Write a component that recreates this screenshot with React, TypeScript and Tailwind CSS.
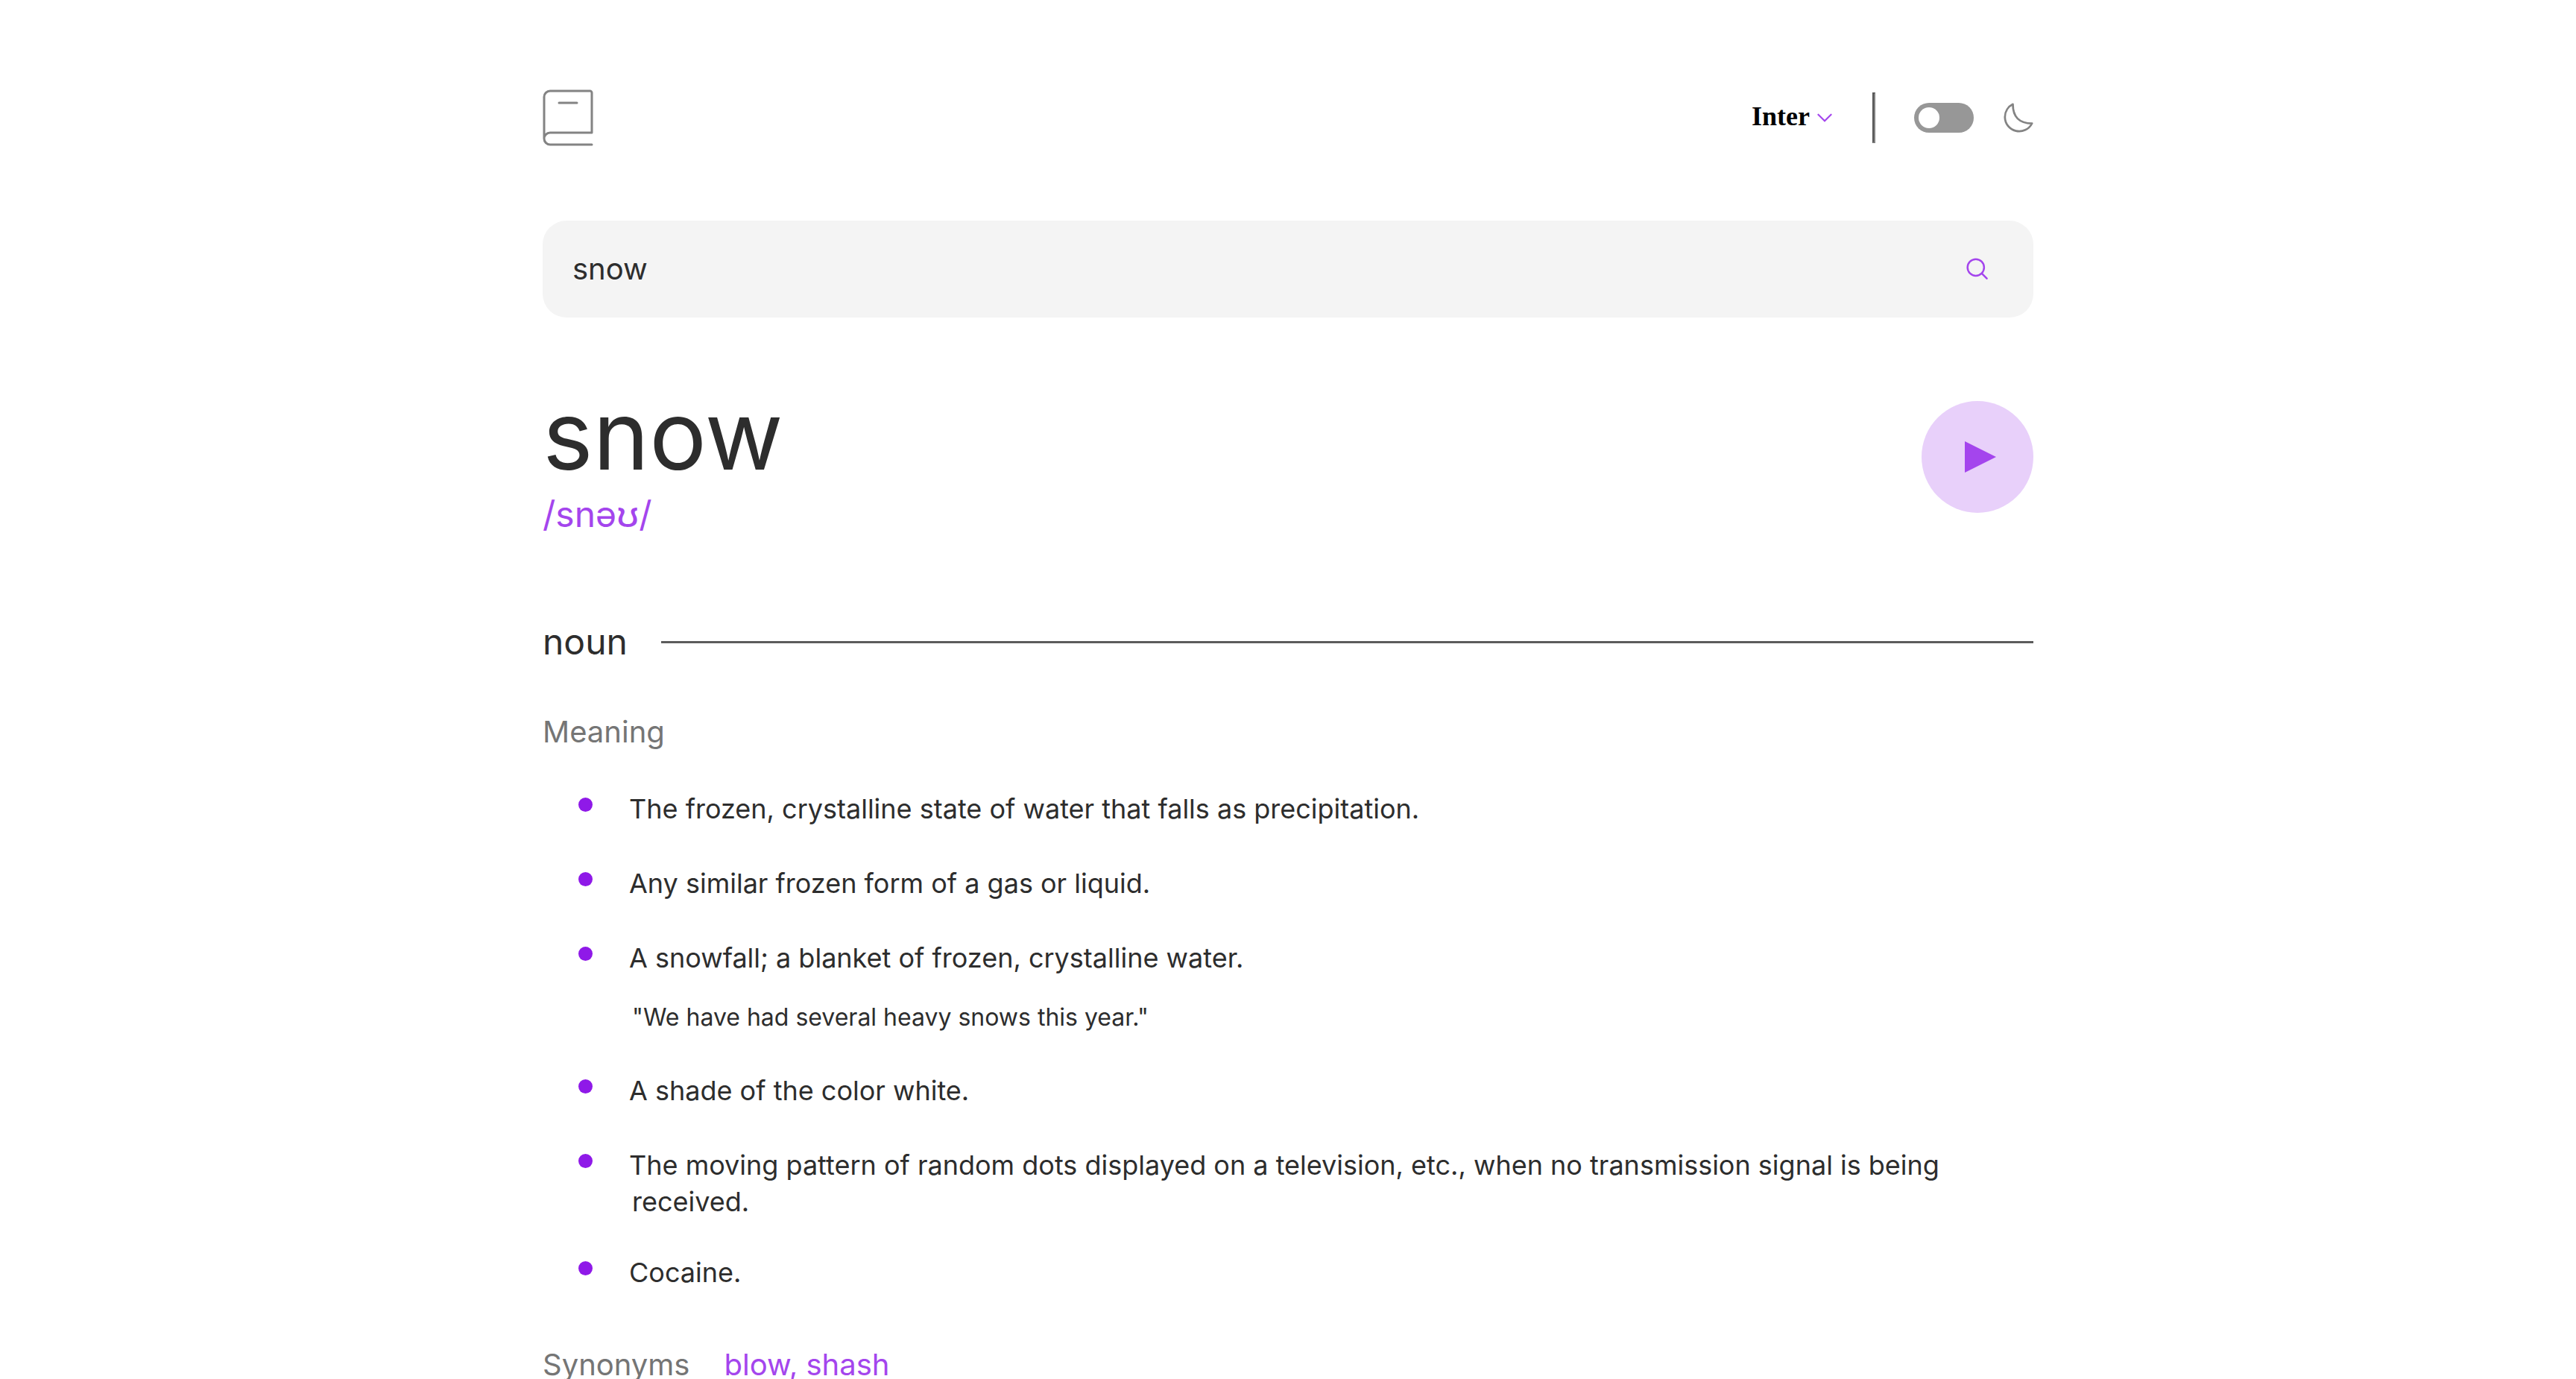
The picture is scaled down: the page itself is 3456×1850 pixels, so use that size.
import { useState } from "react";

type Definition = { text: string; example?: string };

const definitions: Definition[] = [
  { text: "The frozen, crystalline state of water that falls as precipitation." },
  { text: "Any similar frozen form of a gas or liquid." },
  {
    text: "A snowfall; a blanket of frozen, crystalline water.",
    example: '"We have had several heavy snows this year."',
  },
  { text: "A shade of the color white." },
  {
    text: "The moving pattern of random dots displayed on a television, etc., when no transmission signal is being received.",
  },
  { text: "Cocaine." },
];

const synonyms = ["blow", "shash"];

function BookLogo() {
  return (
    <svg className="h-[76px] w-[68px]" viewBox="0 0 34 38" aria-hidden="true">
      <path
        d="M1 33V5a4 4 0 0 1 4-4h26.8A1.2 1.2 0 0 1 33 2.2V29M5 29h28M5 37h28M5 37a4 4 0 1 1 0-8M11 9h12"
        fill="none"
        stroke="#838383"
        strokeLinecap="round"
        strokeWidth="1.5"
      />
    </svg>
  );
}

function FontPicker() {
  return (
    <div className="relative">
      <select
        aria-label="Font"
        defaultValue="Inter"
        className="block appearance-none bg-transparent pr-[30px] pb-1 font-['Liberation_Serif',serif] text-[36px] leading-[44px] font-bold text-black outline-none"
      >
        <option>Inter</option>
      </select>
      <svg
        className="pointer-events-none absolute top-1/2 right-0 h-[12px] w-[20px] -translate-y-1/2"
        viewBox="0 0 14 8"
        aria-hidden="true"
      >
        <path d="m1 1 6 6 6-6" fill="none" stroke="#A445ED" strokeWidth="1.5" strokeLinecap="round" />
      </svg>
    </div>
  );
}

function ThemeSwitch() {
  const [dark, setDark] = useState(false);
  return (
    <label className="flex items-center gap-10">
      <input
        type="checkbox"
        role="switch"
        aria-label="Dark mode"
        checked={dark}
        onChange={(e) => setDark(e.target.checked)}
        className="flex h-10 w-20 appearance-none items-center rounded-full bg-[#979797] px-1.5 before:size-7 before:rounded-full before:bg-white checked:justify-end checked:bg-[#a445ed]"
      />
      <svg className="size-10" viewBox="0 0 22 22" aria-hidden="true">
        <path
          d="M1 10.449a10.544 10.544 0 0 0 19.993 4.686C11.544 15.135 6.858 10.448 6.858 1A10.545 10.545 0 0 0 1 10.449Z"
          fill="none"
          stroke="#838383"
          strokeWidth="1.5"
          strokeLinecap="round"
          strokeLinejoin="round"
        />
      </svg>
    </label>
  );
}

function SearchBar() {
  const [query, setQuery] = useState("snow");
  return (
    <form
      onSubmit={(e) => e.preventDefault()}
      className="mt-[100px] flex h-[130px] items-center rounded-[32px] bg-[#f4f4f4] pr-[60px] pl-10"
    >
      <input
        type="text"
        aria-label="Search for a word"
        value={query}
        onChange={(e) => setQuery(e.target.value)}
        className="min-w-0 flex-1 bg-transparent text-[40px] outline-none"
      />
      <button type="submit" aria-label="Search">
        <svg className="size-[30px]" viewBox="0 0 18 18" aria-hidden="true">
          <path
            d="m12.663 12.663 3.887 3.887M1 7.664a6.665 6.665 0 1 0 13.33 0 6.665 6.665 0 0 0-13.33 0Z"
            fill="none"
            stroke="#A445ED"
            strokeWidth="1.5"
            strokeLinecap="round"
            strokeLinejoin="round"
          />
        </svg>
      </button>
    </form>
  );
}

function WordHeader() {
  return (
    <section className="mt-20 flex items-center justify-between">
      <div>
        <h1 className="text-[128px] leading-[155px]">snow</h1>
        <p className="text-[48px] leading-[58px] text-[#a445ed]">/snəʊ/</p>
      </div>
      <button type="button" aria-label="Play pronunciation" className="size-[150px] rounded-full bg-[#e8d0fa]">
        <svg className="size-full" viewBox="0 0 75 75" aria-hidden="true">
          <path d="M29 27v21l21-10.5z" fill="#A445ED" />
        </svg>
      </button>
    </section>
  );
}

export default function App() {
  return (
    <div className="min-h-screen bg-white px-8 pt-[120px] font-['Inter',sans-serif] text-[#2d2d2d]">
      <div className="mx-auto max-w-[2000px]">
        <header className="flex items-center justify-between">
          <BookLogo />
          <div className="flex items-center">
            <FontPicker />
            <div className="mr-[52px] ml-[54px] h-[68px] w-1 border-2 border-t-[#555] border-r-[#828282] border-b-[#828282] border-l-[#555]" />
            <ThemeSwitch />
          </div>
        </header>

        <SearchBar />

        <main>
          <WordHeader />

          <section className="mt-[113px]">
            <div className="flex items-center gap-[45px]">
              <h2 className="text-[48px] leading-[58px]">noun</h2>
              <hr className="h-[3px] flex-1 border-0 bg-[#5c5c5c]" />
            </div>

            <h3 className="mt-[68px] text-[40px] leading-[48px] text-[#757575]">Meaning</h3>

            <ul className="mt-[34px] flex list-inside list-disc flex-col gap-7 pl-[120px] text-[36px] leading-[normal]">
              {definitions.map((d) => (
                <li key={d.text} className="indent-[-72px] marker:text-[60px] marker:text-[#8f19e8]">
                  <span className="-ml-3">{d.text}</span>
                  {d.example && <p className="mt-[33px] pb-1.5 indent-0 text-[32px]">{d.example}</p>}
                </li>
              ))}
            </ul>

            <div className="mt-[73px] flex gap-[46px] text-[40px] leading-[48px]">
              <h3 className="text-[#757575]">Synonyms</h3>
              <p className="text-[#a445ed]">{synonyms.join(", ")}</p>
            </div>
          </section>
        </main>
      </div>
    </div>
  );
}
